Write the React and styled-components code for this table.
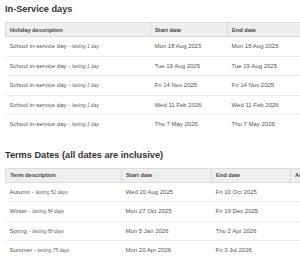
import React from "react";
import styled, { createGlobalStyle } from "styled-components";

const Global = createGlobalStyle`
  html, body { margin: 0; padding: 0; background: #fff; overflow: hidden; }
  body { font-family: "Liberation Sans", Arial, sans-serif; }
`;

const Page = styled.div`
  width: 300px;
  height: 278px;
  overflow: hidden;
  padding: 3px 0 0 5px;
  box-sizing: border-box;
`;

const Title = styled.h2`
  margin: 0;
  font-size: 9.2px;
  line-height: 12px;
  font-weight: bold;
  color: #333;
  white-space: nowrap;
  margin-bottom: ${(p) => p.$gap}px;
  margin-top: ${(p) => p.$top || 0}px;
`;

const Table = styled.table`
  border-collapse: collapse;
  table-layout: fixed;
  width: ${(p) => p.$width}px;
`;

const Th = styled.th`
  background: #eeeeee;
  border: 1px solid #dcdcdc;
  height: 13px;
  padding: 0 4px;
  text-align: left;
  font-size: 5.7px;
  font-weight: bold;
  color: #444;
  white-space: nowrap;
  overflow: hidden;
`;

const Tr = styled.tr`
  border-bottom: 1px solid ${(p) => (p.$last ? "transparent" : "#ececec")};
`;

const Td = styled.td`
  height: ${(p) => p.$h}px;
  padding: 0 4px;
  font-size: 6px;
  color: #555;
  white-space: nowrap;
  overflow: hidden;
  vertical-align: middle;
`;

const Note = styled.em`
  font-size: 4.8px;
  color: #666;
`;

const service = [
  ["Mon 18 Aug 2025", "Mon 18 Aug 2025"],
  ["Tue 19 Aug 2025", "Tue 19 Aug 2025"],
  ["Fri 14 Nov 2025", "Fri 14 Nov 2025"],
  ["Wed 11 Feb 2026", "Wed 11 Feb 2026"],
  ["Thu 7 May 2026", "Thu 7 May 2026"],
];

const terms = [
  ["Autumn", "lasting 52 days", "Wed 20 Aug 2025", "Fri 10 Oct 2025"],
  ["Winter", "lasting 54 days", "Mon 27 Oct 2025", "Fri 19 Dec 2025"],
  ["Spring", "lasting 88 days", "Mon 5 Jan 2026", "Thu 2 Apr 2026"],
  ["Summer", "lasting 75 days", "Mon 20 Apr 2026", "Fri 3 Jul 2026"],
];

export default function App() {
  return (
    <Page>
      <Global />
      <Title $gap={7}>In-Service days</Title>
      <Table $width={300}>
        <colgroup>
          <col style={{ width: 145 }} />
          <col style={{ width: 77 }} />
          <col style={{ width: 78 }} />
        </colgroup>
        <thead>
          <tr>
            <Th>Holiday description</Th>
            <Th>Start date</Th>
            <Th>End date</Th>
          </tr>
        </thead>
        <tbody>
          {service.map(([s, e], i) => (
            <Tr key={i} $last={i === service.length - 1}>
              <Td $h={18.5}>
                School in-service day - <Note>lasting 1 day</Note>
              </Td>
              <Td $h={18.5}>{s}</Td>
              <Td $h={18.5}>{e}</Td>
            </Tr>
          ))}
        </tbody>
      </Table>
      <Title $top={14} $gap={7}>Terms Dates (all dates are inclusive)</Title>
      <Table $width={360}>
        <colgroup>
          <col style={{ width: 116 }} />
          <col style={{ width: 90 }} />
          <col style={{ width: 79 }} />
          <col style={{ width: 75 }} />
        </colgroup>
        <thead>
          <tr>
            <Th>Term description</Th>
            <Th>Start date</Th>
            <Th>End date</Th>
            <Th>Additional info</Th>
          </tr>
        </thead>
        <tbody>
          {terms.map(([n, l, s, e], i) => (
            <Tr key={i} $last={i === terms.length - 1}>
              <Td $h={18.5}>
                {n} - <Note>{l}</Note>
              </Td>
              <Td $h={18.5}>{s}</Td>
              <Td $h={18.5}>{e}</Td>
              <Td $h={18.5}></Td>
            </Tr>
          ))}
        </tbody>
      </Table>
    </Page>
  );
}
